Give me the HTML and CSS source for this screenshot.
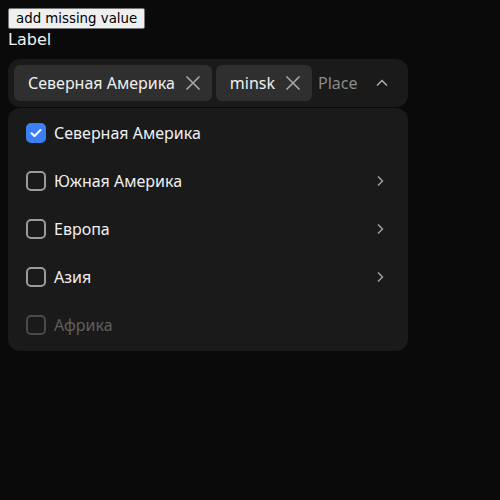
FILE: index.html
```html
<!DOCTYPE html>
<html>
<head>
<meta charset="utf-8">
<link rel="stylesheet" href="styles.css">
</head>
<body>
<button class="add-btn">add missing value</button>
<div class="label">Label</div>
<div class="field">
  <div class="tag"><span class="tag-text">Северная Америка</span>
    <svg class="x" width="16" height="16" viewBox="0 0 16 16"><path d="M1.5 1.5L14.5 14.5M14.5 1.5L1.5 14.5" stroke="currentColor" stroke-width="1.6" fill="none"/></svg>
  </div>
  <div class="tag"><span class="tag-text">minsk</span>
    <svg class="x" width="16" height="16" viewBox="0 0 16 16"><path d="M1.5 1.5L14.5 14.5M14.5 1.5L1.5 14.5" stroke="currentColor" stroke-width="1.6" fill="none"/></svg>
  </div>
  <span class="placeholder">Place</span>
  <svg class="chev-up" width="12" height="8" viewBox="0 0 12 8"><path d="M1 6.5L6 1.5L11 6.5" stroke="currentColor" stroke-width="1.5" fill="none"/></svg>
</div>
<div class="menu">
  <div class="item">
    <span class="cb checked"><svg width="12" height="10" viewBox="0 0 12 10"><path d="M1.5 5.2L4.5 8L10.5 2" stroke="#fff" stroke-width="2" fill="none" stroke-linecap="round" stroke-linejoin="round"/></svg></span>
    <span class="item-text">Северная Америка</span>
  </div>
  <div class="item">
    <span class="cb"></span>
    <span class="item-text">Южная Америка</span>
    <svg class="chev-r" width="8" height="12" viewBox="0 0 8 12"><path d="M2 1.5L6.5 6L2 10.5" stroke="currentColor" stroke-width="1.5" fill="none"/></svg>
  </div>
  <div class="item">
    <span class="cb"></span>
    <span class="item-text">Европа</span>
    <svg class="chev-r" width="8" height="12" viewBox="0 0 8 12"><path d="M2 1.5L6.5 6L2 10.5" stroke="currentColor" stroke-width="1.5" fill="none"/></svg>
  </div>
  <div class="item">
    <span class="cb"></span>
    <span class="item-text">Азия</span>
    <svg class="chev-r" width="8" height="12" viewBox="0 0 8 12"><path d="M2 1.5L6.5 6L2 10.5" stroke="currentColor" stroke-width="1.5" fill="none"/></svg>
  </div>
  <div class="item disabled">
    <span class="cb"></span>
    <span class="item-text">Африка</span>
  </div>
</div>
</body>
</html>
```

FILE: styles.css
```css
html, body {
  background: #0a0a0a;
}
body {
  margin: 8px;
  color: #f0f0f0;
  font-family: "DejaVu Sans", sans-serif;
  font-size: 16px;
}
.add-btn {
  font-family: "DejaVu Sans", sans-serif;
  font-size: 13.33px;
  color: #000;
  background: #efefef;
  border: 1px solid #767676;
  border-radius: 2px;
  padding: 1px 7px;
  display: block;
  height: 21px;
  line-height: 16px;
}
.label {
  line-height: 19px;
  padding-top: 1px;
  margin-bottom: 10px;
}
.field {
  font-family: "Noto Sans", sans-serif;
  width: 400px;
  box-sizing: border-box;
  height: 48px;
  padding: 6px;
  background: #1a1a1a;
  border-radius: 12px;
  display: flex;
  align-items: center;
  gap: 4px;
}
.tag {
  height: 36px;
  box-sizing: border-box;
  background: #2f2f2f;
  border-radius: 6px;
  display: flex;
  align-items: center;
  padding: 0 11px 0 14px;
  gap: 10px;
  color: #f0f0f0;
}
.tag .x {
  color: #a8a8a8;
}
.placeholder {
  color: #8a8a8a;
  margin-left: 2px;
  flex: 1;
}
.chev-up {
  color: #b0b0b0;
  margin-right: 14px;
}
.menu {
  font-family: "Noto Sans", sans-serif;
  width: 400px;
  box-sizing: border-box;
  margin-top: 1px;
  padding: 1px 0 2px;
  background: #1a1a1a;
  border-radius: 12px;
}
.item {
  height: 48px;
  display: flex;
  align-items: center;
  padding: 0 24px 0 18px;
}
.cb {
  width: 20px;
  height: 20px;
  box-sizing: border-box;
  border: 2px solid #9a9a9a;
  border-radius: 5px;
  display: flex;
  align-items: center;
  justify-content: center;
  flex-shrink: 0;
}
.cb.checked {
  background: #3b7ff5;
  border-color: #3b7ff5;
}
.item-text {
  margin-left: 8px;
  flex: 1;
}
.chev-r {
  color: #a0a0a0;
}
.disabled .cb {
  border-color: #4a4a4a;
}
.disabled .item-text {
  color: #5f5f5f;
}
```
